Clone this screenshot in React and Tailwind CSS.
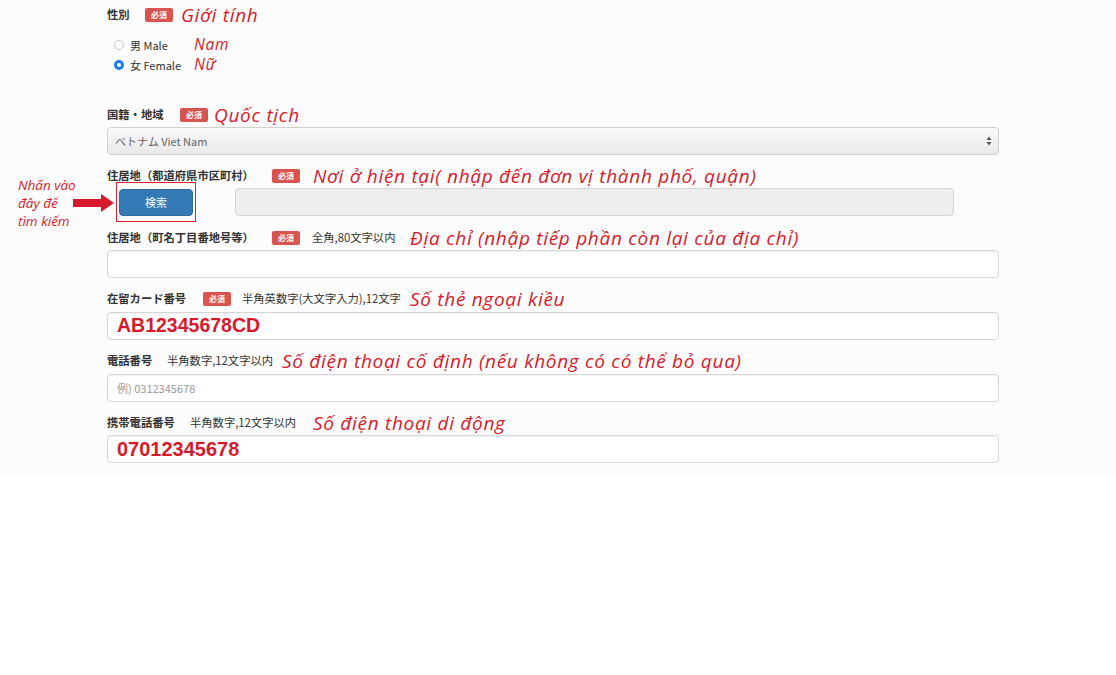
import React from 'react';

const jp = { fontFamily: '"Noto Sans CJK JP", "Noto Sans", sans-serif' };
const note = { fontFamily: '"Open Sans", "Noto Sans", sans-serif' };
const val = { fontFamily: '"Liberation Sans", Arial, sans-serif' };

function Badge() {
  return (
    <span className="flex items-center justify-center w-[28px] h-[14px] rounded-[2px] bg-[#d9534f] text-white text-[8px] font-bold leading-none" style={jp}>
      必須
    </span>
  );
}

function Note({ children, className = 'text-[19px]' }) {
  return (
    <span className={`italic font-normal tracking-[0.7px] text-[#d71a2b] leading-none whitespace-nowrap ${className}`} style={note}>
      {children}
    </span>
  );
}

function LabelRow({ label, required, hint, text, noteX, badgeX, hintX }) {
  return (
    <div className="relative h-[20px] flex items-center">
      <span className="text-[11.3px] font-bold text-[#333] leading-none" style={jp}>{label}</span>
      {required && (
        <div className="absolute top-[3px] flex" style={{ left: badgeX }}><Badge /></div>
      )}
      {hint && (
        <div className="absolute top-0 h-[20px] flex items-center text-[11.3px] text-[#333] leading-none" style={{ ...jp, left: hintX }}>{hint}</div>
      )}
      <div className="absolute top-0 h-[20px] flex items-center" style={{ left: noteX }}><Note>{text}</Note></div>
    </div>
  );
}

function Field({ children }) {
  return (
    <div className="h-[28px] w-full rounded-[4px] border border-[#d6d6d6] bg-white flex items-center px-[9px] shadow-[inset_0_1px_1px_rgba(0,0,0,0.05)]">
      {children}
    </div>
  );
}

function Radio({ checked, label, ann }) {
  return (
    <div className="h-[20px] flex items-center pl-[7px]">
      {checked ? (
        <span className="w-[10px] h-[10px] rounded-full bg-[#1e7cf2] flex items-center justify-center">
          <span className="w-[4px] h-[4px] rounded-full bg-white" />
        </span>
      ) : (
        <span className="w-[10px] h-[10px] rounded-full border border-[#c8c8c8] bg-white" />
      )}
      <span className="ml-[6px] w-[64px] text-[11px] text-[#333] leading-none" style={jp}>{label}</span>
      <Note className="text-[15.5px]">{ann}</Note>
    </div>
  );
}

export default function App() {
  return (
    <div className="w-[1116px] h-[675px] bg-white">
      <div className="h-[477px] bg-[#fcfcfc] pt-[5px]">
        <div className="ml-[107px] w-[892px]">
          {/* Gender */}
          <LabelRow label="性別" required badgeX={38} noteX={74} text="Giới tính" />
          <div className="mt-[10px]">
            <Radio label="男 Male" ann="Nam" />
            <Radio checked label="女 Female" ann="Nữ" />
          </div>

          {/* Nationality */}
          <div className="mt-[30px]">
            <LabelRow label="国籍・地域" required badgeX={73} noteX={107} text="Quốc tịch" />
            <div className="mt-[2px] h-[28px] rounded-[4px] border border-[#d0d0d0] bg-gradient-to-b from-[#fafafa] to-[#e9e9e9] flex items-center justify-between pl-[7px] pr-[6px]">
              <span className="text-[11px] text-[#666]" style={jp}>ベトナム Viet Nam</span>
              <svg width="6" height="10" viewBox="0 0 6 10">
                <path d="M3 0.5 L5.5 4 H0.5 Z" fill="#555" />
                <path d="M3 9.5 L5.5 6 H0.5 Z" fill="#555" />
              </svg>
            </div>
          </div>

          {/* Prefecture / city */}
          <div className="mt-[11px]">
            <LabelRow label="住居地（都道府県市区町村）" required badgeX={165} noteX={206} text="Nơi ở hiện tại( nhập đến đơn vị thành phố, quận)" />
            <div className="relative mt-[2px] h-[28px] flex items-center">
              <div className="absolute left-[-89px] top-[-12px] w-[76px] text-[13.5px] leading-[18px] italic text-[#d71a2b]" style={note}>
                Nhấn vào<br />đây để<br />tìm kiếm
              </div>
              <svg className="absolute left-[-34px] top-[6px]" width="42" height="18" viewBox="0 0 42 18">
                <path d="M0 5 H28 V0 L41 9 L28 18 V13 H0 Z" fill="#d71a2b" />
              </svg>
              <div className="ml-[9px] w-[80px] h-[40px] border border-[#e0202f] flex items-center justify-center -my-[6px]">
                <div className="w-[74px] h-[27px] rounded-[4px] bg-[#337ab7] border border-[#2e6da4] flex items-center justify-center text-white text-[11px]" style={jp}>
                  検索
                </div>
              </div>
              <div className="ml-[39px] w-[719px] h-[28px] rounded-[4px] border border-[#d4d4d4] bg-[#eeeeee]" />
            </div>
          </div>

          {/* Address */}
          <div className="mt-[12px]">
            <LabelRow label="住居地（町名丁目番地号等）" required badgeX={165} hint="全角,80文字以内" hintX={205} noteX={303} text="Địa chỉ (nhập tiếp phần còn lại của địa chỉ)" />
            <div className="mt-[2px]"><Field /></div>
          </div>

          {/* Residence card */}
          <div className="mt-[11px]">
            <LabelRow label="在留カード番号" required badgeX={96} hint="半角英数字(大文字入力),12文字" hintX={135} noteX={303} text="Số thẻ ngoại kiều" />
            <div className="mt-[3px]">
              <Field>
                <span className="text-[19.5px] font-bold text-[#d71a2b] leading-none" style={val}>AB12345678CD</span>
              </Field>
            </div>
          </div>

          {/* Phone */}
          <div className="mt-[11px]">
            <LabelRow label="電話番号" hint="半角数字,12文字以内" hintX={60} noteX={175} text="Số điện thoại cố định (nếu không có có thể bỏ qua)" />
            <div className="mt-[3px]">
              <Field>
                <span className="text-[11px] text-[#999]" style={jp}>例) 0312345678</span>
              </Field>
            </div>
          </div>

          {/* Mobile */}
          <div className="mt-[11px]">
            <LabelRow label="携帯電話番号" hint="半角数字,12文字以内" hintX={83} noteX={206} text="Số điện thoại di động" />
            <div className="mt-[2px]">
              <Field>
                <span className="text-[20px] font-bold text-[#d71a2b] leading-none" style={val}>07012345678</span>
              </Field>
            </div>
          </div>
        </div>
      </div>
    </div>
  );
}
